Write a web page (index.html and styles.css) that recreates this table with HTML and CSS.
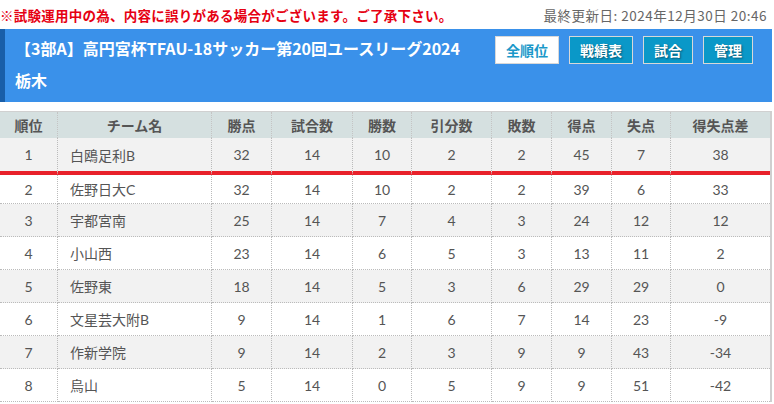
FILE: index.html
```html
<!DOCTYPE html>
<html lang="ja">
<head>
    <meta charset="UTF-8">
    <meta name="viewport" content="width=device-width, initial-scale=1.0">
    <title>順位表</title>
    <link rel="stylesheet" href="styles.css">
</head>
<body>
    <div class="page">
        <!-- Notice bar -->
        <div class="topbar">
            <p class="notice">※試験運用中の為、内容に誤りがある場合がございます。ご了承下さい。</p>
            <p class="updated">最終更新日: 2024年12月30日 20:46</p>
        </div>

        <!-- League header -->
        <div class="league-head">
            <h1 class="league-title">
                <span>【3部A】高円宮杯TFAU-18サッカー第20回ユースリーグ2024</span>
                <span class="region">栃木</span>
            </h1>
            <nav class="league-nav">
                <a href="#" class="nav-btn active">全順位</a>
                <a href="#" class="nav-btn">戦績表</a>
                <a href="#" class="nav-btn">試合</a>
                <a href="#" class="nav-btn">管理</a>
            </nav>
        </div>

        <!-- Standings -->
        <table class="standings">
            <colgroup>
                <col class="c-rank">
                <col class="c-team">
                <col class="c-pts">
                <col class="c-played">
                <col class="c-win">
                <col class="c-draw">
                <col class="c-lose">
                <col class="c-gf">
                <col class="c-ga">
                <col class="c-gd">
            </colgroup>
            <thead>
                <tr>
                    <th>順位</th>
                    <th>チーム名</th>
                    <th>勝点</th>
                    <th>試合数</th>
                    <th>勝数</th>
                    <th>引分数</th>
                    <th>敗数</th>
                    <th>得点</th>
                    <th>失点</th>
                    <th>得失点差</th>
                </tr>
            </thead>
            <tbody>
                <tr class="promote-line">
                    <td>1</td><td class="team">白鴎足利B</td><td>32</td><td>14</td><td>10</td><td>2</td><td>2</td><td>45</td><td>7</td><td>38</td>
                </tr>
                <tr class="after-line">
                    <td>2</td><td class="team">佐野日大C</td><td>32</td><td>14</td><td>10</td><td>2</td><td>2</td><td>39</td><td>6</td><td>33</td>
                </tr>
                <tr>
                    <td>3</td><td class="team">宇都宮南</td><td>25</td><td>14</td><td>7</td><td>4</td><td>3</td><td>24</td><td>12</td><td>12</td>
                </tr>
                <tr>
                    <td>4</td><td class="team">小山西</td><td>23</td><td>14</td><td>6</td><td>5</td><td>3</td><td>13</td><td>11</td><td>2</td>
                </tr>
                <tr>
                    <td>5</td><td class="team">佐野東</td><td>18</td><td>14</td><td>5</td><td>3</td><td>6</td><td>29</td><td>29</td><td>0</td>
                </tr>
                <tr>
                    <td>6</td><td class="team">文星芸大附B</td><td>9</td><td>14</td><td>1</td><td>6</td><td>7</td><td>14</td><td>23</td><td>-9</td>
                </tr>
                <tr>
                    <td>7</td><td class="team">作新学院</td><td>9</td><td>14</td><td>2</td><td>3</td><td>9</td><td>9</td><td>43</td><td>-34</td>
                </tr>
                <tr>
                    <td>8</td><td class="team">烏山</td><td>5</td><td>14</td><td>0</td><td>5</td><td>9</td><td>9</td><td>51</td><td>-42</td>
                </tr>
            </tbody>
        </table>
    </div>
</body>
</html>
```

FILE: styles.css
```css
body {
    margin: 0;
    background-color: #fff;
    font-family: "Noto Sans CJK JP", sans-serif;
}
.page {
    width: 772px;
}
.topbar {
    display: flex;
    justify-content: space-between;
    align-items: center;
    height: 29px;
    padding-right: 5px;
}
.topbar p {
    margin: 0;
    font-size: 13.5px;
}
.notice {
    color: #e60012;
    font-weight: bold;
    letter-spacing: 0.25px;
}
.updated {
    color: #666;
    letter-spacing: 0.5px;
}
.league-head {
    display: flex;
    align-items: flex-start;
    gap: 20px;
    background-color: #3a91ea;
    border-left: 5px solid #195ea8;
    padding: 3px 19px 6px 10px;
    margin-bottom: 9px;
}
.league-title {
    flex: 1;
    margin: 0;
    color: #fff;
    font-size: 16px;
    font-weight: bold;
    line-height: 32px;
}
.league-title .region {
    display: block;
}
.league-nav {
    display: flex;
    gap: 10px;
    margin-top: 4px;
}
.nav-btn {
    display: block;
    height: 26px;
    line-height: 26px;
    padding: 0 10px;
    border: 1px solid #d8d8d8;
    background-color: #0a98c8;
    color: #fff;
    font-size: 14px;
    font-weight: bold;
    text-decoration: none;
    text-shadow: 1px 1px 2px rgba(0, 0, 0, 0.45);
}
.nav-btn.active {
    background-color: #fff;
    color: #1b98c9;
    text-shadow: none;
}
.standings {
    width: 100%;
    table-layout: fixed;
    border-collapse: separate;
    border-spacing: 0;
    border-top: 1px solid #d0d0d0;
    border-right: 2px solid #cfcfcf;
    font-family: Lato, "Noto Sans CJK JP", sans-serif;
    font-size: 14px;
    color: #555;
}
.c-rank { width: 58px; }
.c-team { width: 154px; }
.c-pts { width: 60px; }
.c-played { width: 81px; }
.c-win { width: 59px; }
.c-draw { width: 80px; }
.c-lose { width: 60px; }
.c-gf { width: 60px; }
.c-ga { width: 59px; }
.standings th {
    height: 26px;
    padding: 0;
    background-color: #d5e0e0;
    font-family: "Noto Sans CJK JP", sans-serif;
    font-weight: bold;
    font-size: 14px;
    color: #555;
    border-right: 1px dotted #c4c4c4;
}
.standings td {
    height: 32px;
    padding: 0;
    text-align: center;
    vertical-align: middle;
    border-right: 1px dotted #bbb;
    border-bottom: 1px dotted #bbb;
}
.standings th:last-child, .standings td:last-child {
    border-right: none;
}
.standings tbody tr:nth-child(odd) td {
    background-color: #f2f2f2;
}
.standings td.team {
    text-align: left;
    padding-left: 12px;
}
.standings tr.promote-line td {
    height: 33px;
    border-bottom: 4px solid #e8202a;
}
.standings tr.after-line td {
    height: 28px;
}
```
